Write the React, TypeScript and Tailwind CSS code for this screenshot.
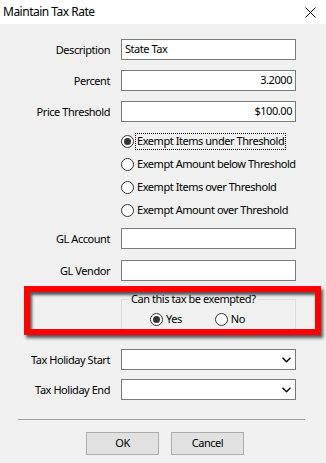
import React from "react";

const font = { fontFamily: '"Noto Sans", "Open Sans", Arial, sans-serif', letterSpacing: "-0.45px" };

function Radio({ checked }: { checked?: boolean }) {
  return (
    <span className="flex h-[13px] w-[13px] shrink-0 items-center justify-center rounded-full border border-[#333333] bg-white">
      {checked && <span className="h-[7px] w-[7px] rounded-full bg-[#333333]" />}
    </span>
  );
}

function Row({
  label,
  value,
  right,
  select,
  className = "",
}: {
  label: string;
  value?: string;
  right?: boolean;
  select?: boolean;
  className?: string;
}) {
  return (
    <div className={"flex items-center " + className}>
      <div className="w-[110px] text-right text-[11px] leading-none text-black">{label}</div>
      <div
        className={
          "ml-[11px] flex h-[21px] w-[175px] items-center border border-[#7a7a7a] bg-white px-[3px] text-[11px] text-black " +
          (right ? "justify-end" : "justify-between")
        }
      >
        <span>{value}</span>
        {select && (
          <svg width="9" height="6" viewBox="0 0 9 6" className="ml-auto mr-[1px]">
            <path d="M0.5 0.8 L4.5 4.8 L8.5 0.8" fill="none" stroke="#000" strokeWidth="1.3" />
          </svg>
        )}
      </div>
    </div>
  );
}

function RadioRow({ label, checked, focus }: { label: string; checked?: boolean; focus?: boolean }) {
  return (
    <div className="flex h-[23px] items-center pl-[121px]">
      <Radio checked={checked} />
      <span
        className={
          "ml-[2px] flex h-[15px] items-center px-[1px] text-[11px] text-black " +
          (focus ? "outline outline-1 outline-dotted outline-black" : "")
        }
      >
        {label}
      </span>
    </div>
  );
}

export default function App() {
  return (
    <div className="h-[463px] w-[326px] overflow-hidden bg-[#f0f0f0]" style={font}>
      <div className="flex h-[24px] items-center justify-between bg-white pl-[3px] pr-[10px]">
        <span className="text-[12px] tracking-[-0.5px] text-black">Maintain Tax Rate</span>
        <svg width="11" height="11" viewBox="0 0 11 11">
          <path d="M0.5 0.5 L10.5 10.5 M10.5 0.5 L0.5 10.5" stroke="#000" strokeWidth="1" />
        </svg>
      </div>
      <div className="flex flex-col pt-[15px]">
        <Row label="Description" value="State Tax" />
        <Row label="Percent" value="3.2000" right className="mt-[10px]" />
        <Row label="Price Threshold" value="$100.00" right className="mt-[10px]" />
        <div className="mt-[8px] flex flex-col">
          <RadioRow label="Exempt Items under Threshold" checked focus />
          <RadioRow label="Exempt Amount below Threshold" />
          <RadioRow label="Exempt Items over Threshold" />
          <RadioRow label="Exempt Amount over Threshold" />
        </div>
        <Row label="GL Account" className="mt-[6px]" />
        <Row label="GL Vendor" className="mt-[11px]" />
        <div className="relative mt-[18px] pl-[121px]">
          <div className="relative h-[31px] w-[175px] border border-[#dcdcdc]">
            <span className="absolute left-[7px] top-[-9px] bg-[#f0f0f0] px-[2px] text-[11px] leading-[16px] text-black">
              Can this tax be exempted?
            </span>
            <div className="flex h-full items-center pt-[9px]">
              <div className="ml-[28px] flex items-center">
                <Radio checked />
                <span className="ml-[3px] text-[11px] text-black">Yes</span>
              </div>
              <div className="ml-[33px] flex items-center">
                <Radio />
                <span className="ml-[3px] text-[11px] text-black">No</span>
              </div>
            </div>
          </div>
          <div className="pointer-events-none absolute left-[24px] top-[-13px] h-[49px] w-[297px] border-[6px] border-[#ff0000] shadow-[2px_3px_3px_rgba(0,0,0,0.65),inset_2px_3px_3px_rgba(0,0,0,0.65)]" />
        </div>
        <Row label="Tax Holiday Start" select className="mt-[19px]" />
        <Row label="Tax Holiday End" select className="mt-[9px]" />
        <div className="ml-[18px] mt-[19px] h-px w-[287px] bg-[#a0a0a0]" />
        <div className="mt-[12px] flex gap-[12px] pl-[86px]">
          <button className="flex h-[23px] w-[73px] items-center justify-center border border-[#adadad] bg-[#e1e1e1] text-[11px] text-black">
            OK
          </button>
          <button className="flex h-[23px] w-[73px] items-center justify-center border border-[#adadad] bg-[#e1e1e1] text-[11px] text-black">
            Cancel
          </button>
        </div>
      </div>
    </div>
  );
}
